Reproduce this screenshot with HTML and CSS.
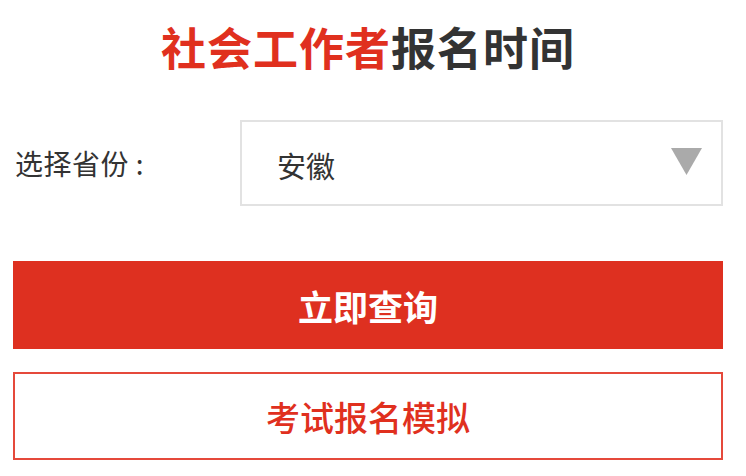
FILE: index.html
```html
<!DOCTYPE html>
<html lang="zh-CN">
<head>
<meta charset="utf-8">
<title>社会工作者报名时间</title>
<link rel="stylesheet" href="styles.css">
</head>
<body>
<div class="page">
  <h1 class="title"><span class="hl">社会工作者</span>报名时间</h1>
  <div class="row">
    <label class="label">选择省份&nbsp;:</label>
    <div class="select">
      <span class="value">安徽</span>
      <svg class="arrow" width="31" height="27" viewBox="0 0 31 27"><polygon points="0,0 31,0 15.5,27" fill="#aaaaaa"/></svg>
    </div>
  </div>
  <button class="btn btn-primary">立即查询</button>
  <button class="btn btn-outline">考试报名模拟</button>
</div>
</body>
</html>
```
FILE: styles.css
```css
html, body {
  margin: 0;
  padding: 0;
  background: #ffffff;
}
body {
  font-family: "Microsoft YaHei", "Noto Sans CJK SC", "Noto Sans", sans-serif;
  width: 746px;
  height: 476px;
  overflow: hidden;
}
.page {
  width: 710px;
  margin-left: 13px;
  display: flex;
  flex-direction: column;
}
.title {
  margin: 0;
  height: 92px;
  display: flex;
  align-items: center;
  justify-content: center;
  font-size: 45px;
  font-weight: 700;
  color: #333333;
  letter-spacing: 1px;
}
.hl {
  color: #e0301e;
}
.row {
  display: flex;
  align-items: center;
  margin-top: 28px;
}
.label {
  width: 227px;
  padding-left: 2px;
  box-sizing: border-box;
  font-size: 28px;
  letter-spacing: 0.5px;
  color: #333333;
}
.select {
  flex: 1;
  height: 86px;
  box-sizing: border-box;
  border: 2px solid #e2e2e2;
  display: flex;
  align-items: center;
  justify-content: space-between;
  padding: 0 19px 0 35px;
}
.value {
  font-size: 29px;
  color: #333333;
  padding-top: 4px;
}
.arrow {
  display: block;
  margin-top: -4px;
}
.btn {
  font-family: inherit;
  width: 710px;
  height: 88px;
  box-sizing: border-box;
  display: flex;
  align-items: center;
  justify-content: center;
  cursor: pointer;
}
.btn-primary {
  margin-top: 55px;
  background: #de3020;
  border: none;
  color: #ffffff;
  font-size: 35px;
  font-weight: 700;
}
.btn-outline {
  margin-top: 23px;
  background: #ffffff;
  border: 2px solid #e5493b;
  color: #e0301e;
  font-size: 34px;
  font-weight: 500;
}
```
